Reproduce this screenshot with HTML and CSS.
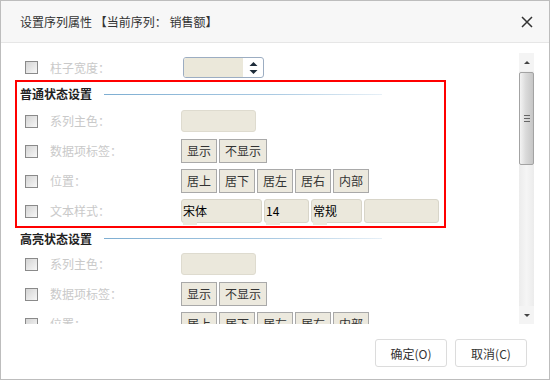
FILE: index.html
```html
<!DOCTYPE html>
<html lang="zh-CN">
<head>
    <meta charset="UTF-8">
    <title>设置序列属性</title>
    <link rel="stylesheet" href="styles.css">
</head>
<body>

<div class="dialog">
    <div class="dialog-header">
        <span class="dialog-title">设置序列属性 【当前序列： 销售额】</span>
        <svg class="close-icon" width="14" height="14" viewBox="0 0 14 14">
            <path d="M2 2 L12 12 M12 2 L2 12" stroke="#333" stroke-width="1.5" fill="none"/>
        </svg>
    </div>

    <div class="dialog-body">
        <div class="form-pane">
            <div class="form-row top-row">
                <span class="check"></span>
                <span class="label">柱子宽度：</span>
                <div class="spinner">
                    <span class="spinner-value"></span>
                    <span class="spinner-arrows">
                        <svg width="9" height="16" viewBox="0 0 9 16">
                            <path d="M0.5 6 L4.5 2 L8.5 6 Z M0.5 10 L8.5 10 L4.5 14 Z" fill="#1d2b3a"/>
                        </svg>
                    </span>
                </div>
            </div>

            <div class="section marked">
                <div class="section-title"><span>普通状态设置</span><i class="section-line"></i></div>
                <div class="form-row">
                    <span class="check"></span>
                    <span class="label">系列主色：</span>
                    <span class="color-box"></span>
                </div>
                <div class="form-row">
                    <span class="check"></span>
                    <span class="label">数据项标签：</span>
                    <button class="opt-btn">显示</button><button class="opt-btn wide">不显示</button>
                </div>
                <div class="form-row">
                    <span class="check"></span>
                    <span class="label">位置：</span>
                    <button class="opt-btn">居上</button><button class="opt-btn">居下</button><button class="opt-btn">居左</button><button class="opt-btn">居右</button><button class="opt-btn">内部</button>
                </div>
                <div class="form-row">
                    <span class="check"></span>
                    <span class="label">文本样式：</span>
                    <span class="select tab w-font">宋体</span>
                    <span class="select tab w-size">14</span>
                    <span class="select tab w-style">常规</span>
                    <span class="select w-color"></span>
                </div>
            </div>

            <div class="section plain">
                <div class="section-title"><span>高亮状态设置</span><i class="section-line"></i></div>
                <div class="form-row">
                    <span class="check"></span>
                    <span class="label">系列主色：</span>
                    <span class="color-box"></span>
                </div>
                <div class="form-row">
                    <span class="check"></span>
                    <span class="label">数据项标签：</span>
                    <button class="opt-btn">显示</button><button class="opt-btn wide">不显示</button>
                </div>
                <div class="form-row">
                    <span class="check"></span>
                    <span class="label">位置：</span>
                    <button class="opt-btn">居上</button><button class="opt-btn">居下</button><button class="opt-btn">居左</button><button class="opt-btn">居右</button><button class="opt-btn">内部</button>
                </div>
            </div>
        </div>

        <div class="scrollbar">
            <div class="scroll-arrow"><i class="tri-up"></i></div>
            <div class="scroll-thumb"><i class="grip"></i></div>
            <div class="scroll-track"></div>
            <div class="scroll-arrow"><i class="tri-down"></i></div>
        </div>
    </div>

    <div class="dialog-footer">
        <button class="foot-btn">确定(O)</button>
        <button class="foot-btn">取消(C)</button>
    </div>
</div>

</body>
</html>
```

FILE: styles.css
```css
body {
    margin: 0;
    font-family: "Noto Sans CJK SC", "Liberation Sans", sans-serif;
    font-size: 12px;
    color: #333;
    background: #fff;
}
.dialog {
    width: 550px;
    height: 380px;
    box-sizing: border-box;
    border: 1px solid #bdbdbd;
    display: flex;
    flex-direction: column;
    background: #fff;
}
.dialog-header {
    height: 41px;
    border-bottom: 1px solid #e6e6e6;
    background: #f7f7f7;
    display: flex;
    align-items: center;
    justify-content: space-between;
    padding: 0 15px 0 19px;
    flex-shrink: 0;
}
.dialog-title {
    font-size: 12px;
    line-height: 16px;
    color: #333;
}
.close-icon { display: block; }

.dialog-body {
    height: 281px;
    display: flex;
    flex-shrink: 0;
}
.form-pane {
    flex: 1;
    overflow: hidden;
    padding-top: 12px;
}
.form-row {
    display: flex;
    align-items: center;
    height: 30px;
    padding-left: 8px;
}
.top-row {
    height: 25px;
    padding-left: 24px;
}
.check {
    width: 13px;
    height: 13px;
    box-sizing: border-box;
    border: 1px solid #8a8a8a;
    background: linear-gradient(135deg, #d4d4d4, #f7f7f7);
    margin-right: 12px;
    flex-shrink: 0;
}
.label {
    width: 131px;
    color: #c9c9c9;
    line-height: 16px;
    flex-shrink: 0;
}

.spinner {
    width: 81px;
    height: 21px;
    box-sizing: border-box;
    margin-left: 2px;
    border: 1px solid #9cadc2;
    border-radius: 3px;
    display: flex;
    overflow: hidden;
    background: #fff;
}
.spinner-value {
    width: 59px;
    background: #ebe8da;
}
.spinner-arrows {
    flex: 1;
    display: flex;
    align-items: center;
    justify-content: center;
}
.spinner-arrows svg { display: block; }

.section {
    margin-left: 14px;
    width: 431px;
    box-sizing: border-box;
    border: 2px solid transparent;
}
.section.marked { border-color: #f00; }
.section.plain { border-top-width: 0; }
.section-title {
    height: 24px;
    display: flex;
    align-items: center;
    padding-left: 3px;
    font-weight: bold;
    color: #222;
    line-height: 16px;
}
.plain .section-title { height: 21px; }
.section-line {
    width: 278px;
    height: 1px;
    margin-left: 12px;
    background: linear-gradient(to right, #7eaed2, #a9c9e2 60%, #e7f0f7);
}

.color-box {
    width: 75px;
    height: 22px;
    box-sizing: border-box;
    border: 1px solid #dedbcf;
    border-radius: 3px;
    background: #ebe8dc;
}
.opt-btn {
    width: 36px;
    height: 24px;
    margin: 0 2px 0 0;
    padding: 0;
    border: 1px solid #a9a9a9;
    background: #ece9de;
    font-family: inherit;
    font-size: 12px;
    line-height: 16px;
    color: #333;
}
.opt-btn.wide { width: 48px; }

.select {
    position: relative;
    height: 24px;
    box-sizing: border-box;
    margin-right: 2px;
    padding-left: 1px;
    border: 1px solid #d8d5c9;
    border-radius: 3px;
    background: #ebe8dc;
    color: #000;
    line-height: 21px;
}
.select.tab::after {
    content: "";
    position: absolute;
    left: 1px;
    top: 100%;
    width: 14px;
    height: 3px;
    background: #ebe8dc;
}
.w-font { width: 81px; }
.w-size { width: 45px; }
.w-style { width: 51px; }
.w-color { width: 75px; }

.scrollbar {
    width: 15px;
    height: 271px;
    margin: 10px 15px 0 0;
    display: flex;
    flex-direction: column;
    background: #f0f0f0;
}
.scroll-arrow {
    height: 18px;
    display: flex;
    align-items: center;
    justify-content: center;
    background: #f4f4f4;
}
.tri-up, .tri-down {
    width: 0;
    height: 0;
    border-left: 3px solid transparent;
    border-right: 3px solid transparent;
}
.tri-up { border-bottom: 3px solid #444; }
.tri-down { border-top: 3px solid #444; }
.scroll-thumb {
    height: 93px;
    margin-top: 1px;
    box-sizing: border-box;
    border: 1px solid #a3a3a3;
    border-radius: 2px;
    background: linear-gradient(to right, #f3f3f3, #dadada 45%, #c6c6c6);
    display: flex;
    align-items: center;
    justify-content: center;
}
.grip {
    width: 6px;
    height: 5px;
    border-top: 1px solid #666;
    border-bottom: 1px solid #666;
    background: linear-gradient(#666, #666) center / 6px 1px no-repeat;
}
.scroll-track {
    flex: 1;
    background: linear-gradient(to right, #ececec, #f5f5f5 50%, #ececec);
}

.dialog-footer {
    flex: 1;
    display: flex;
    justify-content: flex-end;
    align-items: flex-start;
    gap: 8px;
    padding: 15px 22px 0 0;
}
.foot-btn {
    width: 72px;
    height: 28px;
    margin: 0;
    padding: 0;
    border: 1px solid #dcdcdc;
    border-radius: 3px;
    background: #fff;
    font-family: inherit;
    font-size: 12px;
    color: #333;
}
```
